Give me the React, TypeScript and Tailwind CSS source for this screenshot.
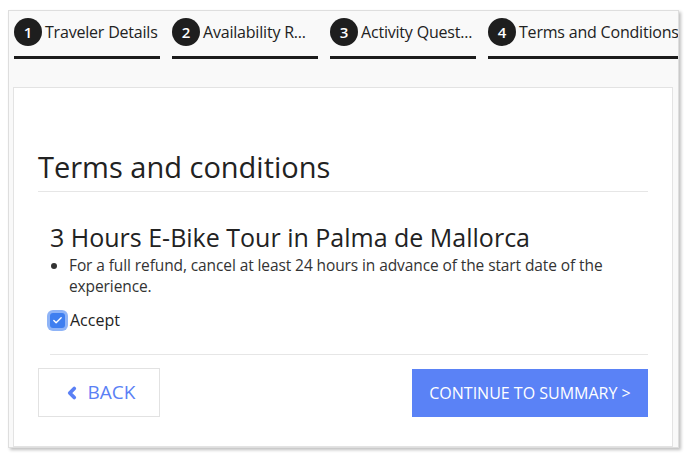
import { Check, ChevronLeft } from "lucide-react";

const steps = [
  { n: 1, label: "Traveler Details", w: "w-[146px]" },
  { n: 2, label: "Availability R...", w: "w-[146px]" },
  { n: 3, label: "Activity Quest...", w: "w-[146px]" },
  { n: 4, label: "Terms and Conditions", w: "w-[200px]" },
];

export default function App() {
  return (
    <div
      className="w-[687px] h-[459px] bg-white overflow-hidden"
      style={{ fontFamily: "'Open Sans', Lato, sans-serif" }}
    >
      <div className="ml-[8px] mt-[10px] w-[671px] h-[438px] bg-[#f9f9f9] border border-[#dedede] shadow-[2px_2px_3px_rgba(0,0,0,0.25)] overflow-hidden">
        {/* Steps */}
        <div className="flex gap-[12px] pl-[5px] pt-[7px] whitespace-nowrap">
          {steps.map((s) => (
            <div
              key={s.n}
              className={`${s.w} shrink-0 border-b-[3px] border-[#1c1c1c] pb-[10px]`}
            >
              <div className="flex items-center gap-[3px]">
                <span className="w-[28px] h-[28px] shrink-0 rounded-full bg-[#1e1e1e] text-white text-[15px] font-semibold flex items-center justify-center">
                  {s.n}
                </span>
                <span className="text-[16px] tracking-[-0.2px] text-[#222]">{s.label}</span>
              </div>
            </div>
          ))}
        </div>

        {/* Card */}
        <div className="ml-[4px] mt-[28px] w-[660px] h-[360px] bg-white border border-[#e3e3e3] px-[24px] pt-[61px]">
          <h1 className="text-[29px] leading-[35px] text-[#222] pb-[7px] border-b border-[#e6e6e6]">
            Terms and conditions
          </h1>
          <div className="pl-[12px] pt-[30px]">
            <h2 className="text-[25px] leading-[30px] text-[#222]">
              3 Hours E-Bike Tour in Palma de Mallorca
            </h2>
            <ul className="list-disc pl-[19px] mt-[3px] pr-[10px] text-[15.5px] tracking-[-0.1px] leading-[21px] text-[#333]">
              <li>
                For a full refund, cancel at least 24 hours in advance of the
                start date of the experience.
              </li>
            </ul>
            <label className="flex items-center gap-[5px] mt-[11px] text-[16px] text-[#222]">
              <span className="w-[15px] h-[15px] rounded-[3px] bg-[#3f7ff0] flex items-center justify-center ring-[3px] ring-[#8fb4f7]">
                <Check className="w-[11px] h-[11px] text-white" strokeWidth={3} />
              </span>
              Accept
            </label>
            <div className="border-t border-[#e6e6e6] mt-[22px]" />
          </div>
          <div className="flex justify-between items-center mt-[13px]">
            <button className="w-[122px] h-[49px] border border-[#e2e2e2] bg-white text-[#5a80f5] text-[19px] flex items-center justify-center gap-[7px]">
              <ChevronLeft className="w-[18px] h-[18px]" strokeWidth={5} />
              BACK
            </button>
            <button className="w-[236px] h-[48px] bg-[#5a82f6] text-white text-[16px] flex items-center justify-center">
              CONTINUE TO SUMMARY &gt;
            </button>
          </div>
        </div>
      </div>
    </div>
  );
}
